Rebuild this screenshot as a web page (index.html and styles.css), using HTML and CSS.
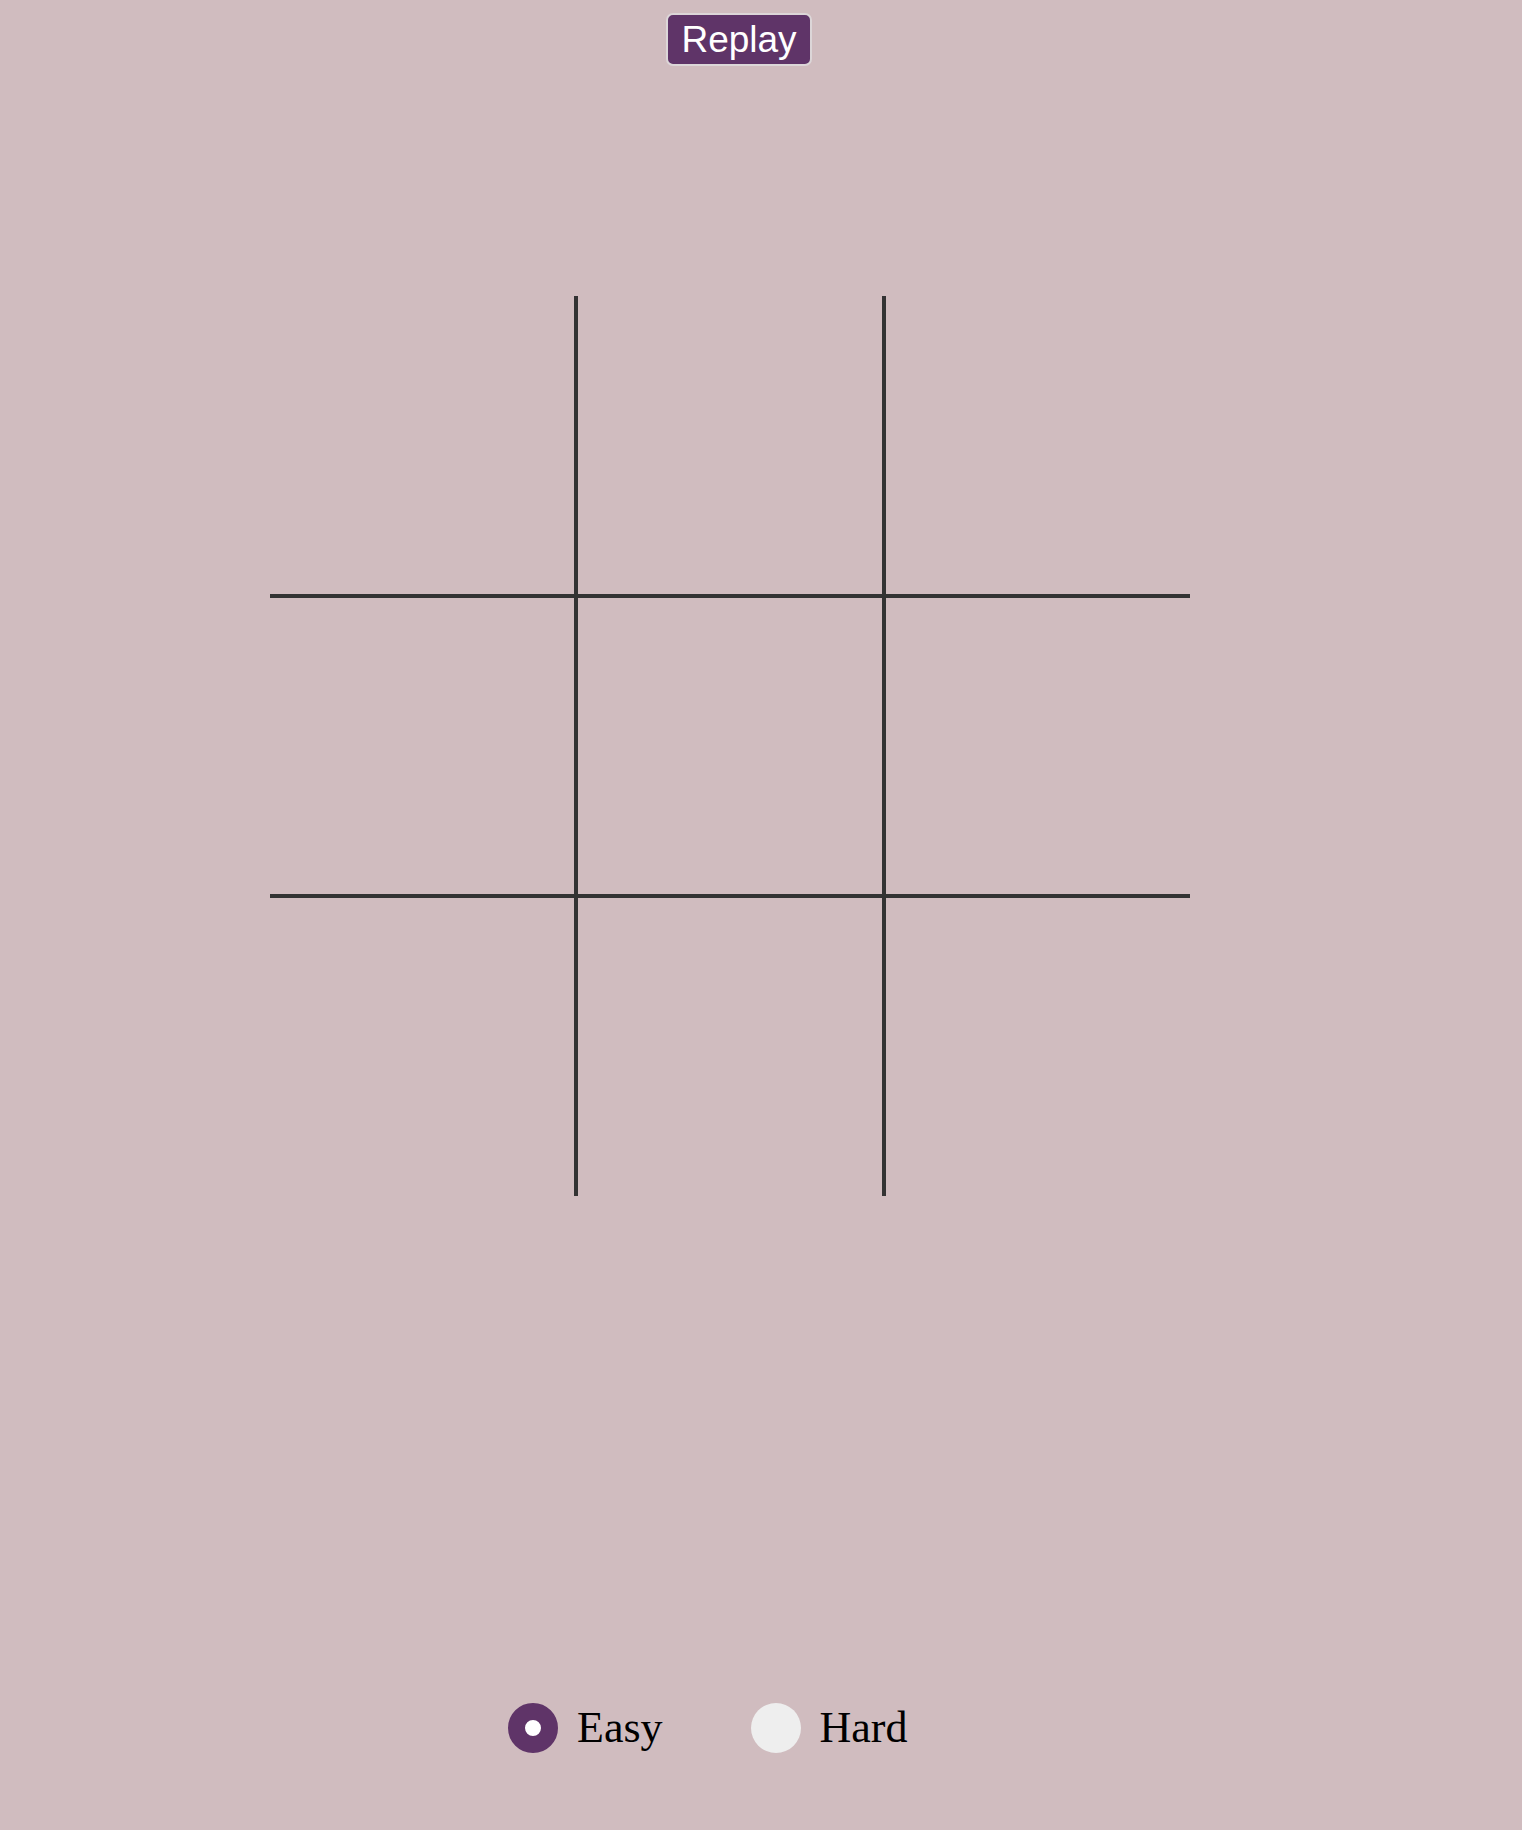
FILE: index.html
```html
<!DOCTYPE html>
<html lang="en">
<head>
  <meta charset="UTF-8">
  <title>Tic Tac Toe</title>
  <link rel="stylesheet" href="styles.css">
</head>
<body>
  <div id="game">
    <div id="top">
      <button id="replay">Replay</button>
    </div>
    <div id="board">
      <div class="cell"></div>
      <div class="cell"></div>
      <div class="cell"></div>
      <div class="cell"></div>
      <div class="cell"></div>
      <div class="cell"></div>
      <div class="cell"></div>
      <div class="cell"></div>
      <div class="cell"></div>
    </div>
    <div id="level">
      <label class="choice easy"><input type="radio" name="level" value="easy" checked>Easy</label>
      <label class="choice hard"><input type="radio" name="level" value="hard">Hard</label>
    </div>
  </div>
</body>
</html>
```

FILE: styles.css
```css
body, html {
  margin: 0;
  padding: 0;
  height: 100%;
  background: #d0bcbf;
  overflow: hidden;
}
#game {
  width: 920px;
  margin-left: 270px;
  display: flex;
  flex-direction: column;
}
#top {
  padding-top: 13px;
  height: 296px;
  box-sizing: border-box;
}
#replay {
  margin-left: 396px;
  width: 146px;
  height: 53px;
  padding: 0 10px;
  background: #5f3468;
  color: white;
  border: 2px solid #dcd6d8;
  border-radius: 7px;
  font-family: 'Liberation Sans', Arial, sans-serif;
  font-size: 37px;
  line-height: 49px;
  cursor: pointer;
}
#board {
  display: grid;
  grid-template-columns: 304px 304px 304px;
  grid-template-rows: 298px 296px 298px;
  gap: 4px;
  background: #333333;
}
.cell {
  background: #d0bcbf;
}
#level {
  margin-top: 506px;
  display: flex;
  align-items: center;
  font-family: 'Liberation Serif', 'Times New Roman', serif;
  font-size: 44px;
  color: #000;
}
.choice {
  display: flex;
  align-items: center;
  gap: 19px;
}
.easy {
  margin-left: 238px;
}
.hard {
  margin-left: 88px;
}
.choice input {
  appearance: none;
  -webkit-appearance: none;
  margin: 0;
  width: 50px;
  height: 50px;
  border-radius: 50%;
  background: #eeeeee;
  box-sizing: border-box;
}
.choice input:checked {
  background: white;
  border: 17px solid #5f3468;
}
```
